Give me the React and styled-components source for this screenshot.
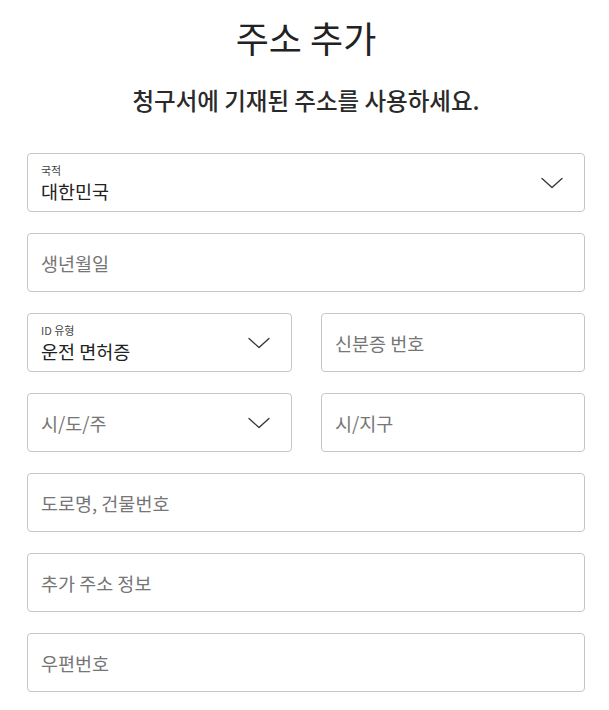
import React from 'react'
import styled, { createGlobalStyle } from 'styled-components'

const GlobalStyle = createGlobalStyle`
  html, body {
    margin: 0;
    padding: 0;
    background: #fff;
  }
  body {
    font-family: "Noto Sans CJK KR", "Noto Sans", sans-serif;
    color: #222;
  }
`

const Page = styled.div`
  width: 609px;
  box-sizing: border-box;
  padding: 0 24px 0 27px;
`

const Title = styled.h1`
  margin: 0;
  padding-top: 13px;
  height: 48px;
  line-height: 48px;
  font-size: 36px;
  font-weight: 400;
  text-align: center;
  color: #222;
`

const Subtitle = styled.p`
  margin: 0;
  padding-top: 24px;
  line-height: 30px;
  font-size: 23.5px;
  font-weight: 500;
  text-align: center;
  color: #2a2a2a;
`

const Form = styled.div`
  display: flex;
  flex-direction: column;
  gap: 21px;
  margin-top: 38px;
`

const Row = styled.div`
  display: grid;
  grid-template-columns: 265px 1fr;
  gap: 29px;
`

const Field = styled.div`
  height: 59px;
  box-sizing: border-box;
  border: 1px solid #c6c6c6;
  border-radius: 4px;
  display: flex;
  align-items: center;
  justify-content: space-between;
  padding: 0 20px 0 13px;
  background: #fff;
`

const TextStack = styled.div`
  display: flex;
  flex-direction: column;
  gap: 4px;
`

const SmallLabel = styled.span`
  font-size: 11px;
  line-height: 12px;
  color: #444;
`

const Value = styled.span`
  font-size: 18.5px;
  line-height: 22px;
  color: ${p => (p.$muted ? '#767676' : '#222')};
`

const Chevron = () => (
  <svg width="24" height="12" viewBox="0 0 24 12" fill="none">
    <path d="M2 1.5l10 9 10-9" stroke="#333" strokeWidth="1.3" strokeLinecap="round" strokeLinejoin="round" />
  </svg>
)

function Input({ label, value, placeholder, select }) {
  return (
    <Field>
      <TextStack>
        {label && <SmallLabel>{label}</SmallLabel>}
        <Value $muted={!value}>{value || placeholder}</Value>
      </TextStack>
      {select && <Chevron />}
    </Field>
  )
}

export default function App() {
  return (
    <Page>
      <GlobalStyle />
      <Title>주소 추가</Title>
      <Subtitle>청구서에 기재된 주소를 사용하세요.</Subtitle>
      <Form>
        <Input label="국적" value="대한민국" select />
        <Input placeholder="생년월일" />
        <Row>
          <Input label="ID 유형" value="운전 면허증" select />
          <Input placeholder="신분증 번호" />
        </Row>
        <Row>
          <Input placeholder="시/도/주" select />
          <Input placeholder="시/지구" />
        </Row>
        <Input placeholder="도로명, 건물번호" />
        <Input placeholder="추가 주소 정보" />
        <Input placeholder="우편번호" />
      </Form>
    </Page>
  )
}
